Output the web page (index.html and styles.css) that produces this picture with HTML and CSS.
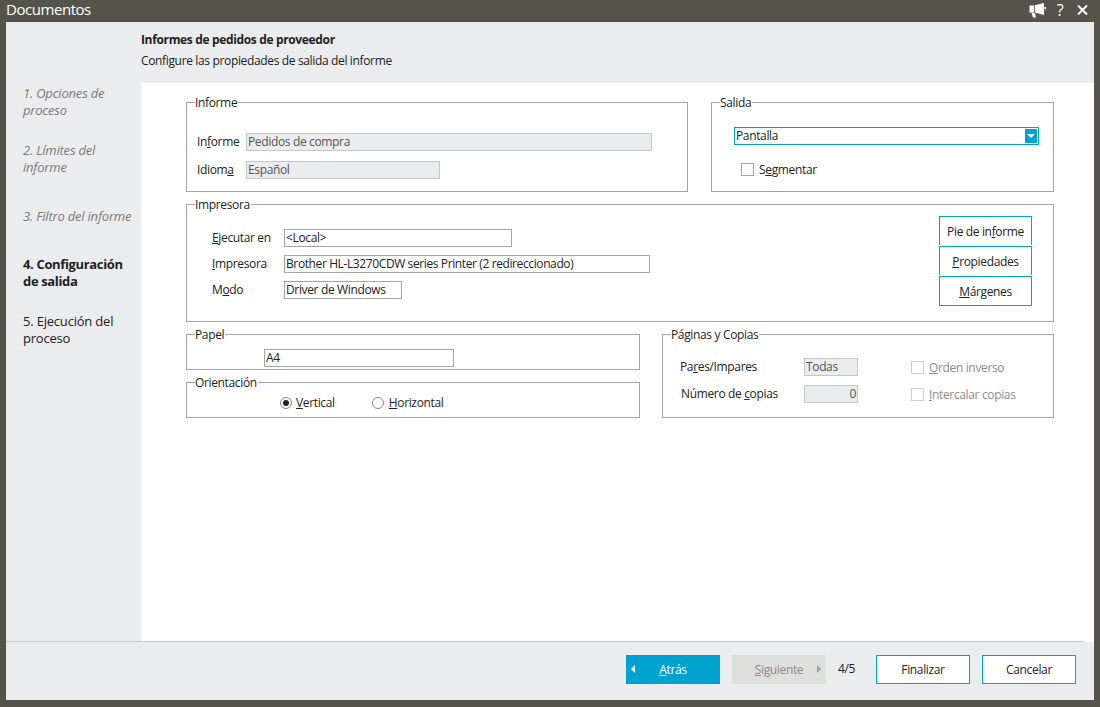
FILE: index.html
```html
<!DOCTYPE html>
<html lang="es">
<head>
    <meta charset="UTF-8">
    <title>Documentos</title>
    <link rel="stylesheet" href="styles.css">
</head>
<body>
<div class="window">
    <div class="titlebar">
        <span class="title">Documentos</span>
        <div class="title-icons">
            <svg class="icon-mega" width="17" height="15" viewBox="0 0 17 15"><path d="M.5 2.500H5v7H.5zM5.800 2.300 15 0v12L5.800 9.500zM15.500 4H17v2.500h-1.500zM2.500 10h3.500l1 4.500H4z" fill="#fff"/></svg>
            <span class="icon-help">?</span>
            <svg class="icon-close" width="11" height="10" viewBox="0 0 11 10"><path d="M1 .5l9 9M10 .5l-9 9" stroke="#fff" stroke-width="2"/></svg>
        </div>
    </div>

    <div class="dialog">
        <div class="head">
            <h1>Informes de pedidos de proveedor</h1>
            <p>Configure las propiedades de salida del informe</p>
        </div>

        <div class="middle">
            <!-- Steps -->
            <div class="steps">
                <div class="step step-1 done">1. Opciones de<br>proceso</div>
                <div class="step step-2 done">2. Límites del<br>informe</div>
                <div class="step step-3 done">3. Filtro del informe</div>
                <div class="step step-4 current">4. Configuración<br>de salida</div>
                <div class="step">5. Ejecución del<br>proceso</div>
            </div>

            <!-- Form -->
            <div class="main">
                <div class="row row-top">
                    <div class="group group-informe">
                        <span class="legend">Informe</span>
                        <div class="field">
                            <label class="lbl-informe">In<u>f</u>orme</label>
                            <div class="input off w-406">Pedidos de compra</div>
                        </div>
                        <div class="field">
                            <label class="lbl-informe">Idiom<u>a</u></label>
                            <div class="input off w-194">Español</div>
                        </div>
                    </div>
                    <div class="group group-salida">
                        <span class="legend">Salida</span>
                        <div class="select">
                            <span>Pantalla</span>
                            <span class="arrow"></span>
                        </div>
                        <div class="check check-seg"><span class="box"></span><span>S<u>e</u>gmentar</span></div>
                    </div>
                </div>

                <div class="group group-impresora">
                    <span class="legend">Impresora</span>
                    <div class="printer-fields">
                        <div class="field">
                            <label class="lbl-printer"><u>E</u>jecutar en</label>
                            <div class="input w-228">&lt;Local&gt;</div>
                        </div>
                        <div class="field">
                            <label class="lbl-printer"><u>I</u>mpresora</label>
                            <div class="input w-366">Brother HL-L3270CDW series Printer (2 redireccionado)</div>
                        </div>
                        <div class="field">
                            <label class="lbl-printer">M<u>o</u>do</label>
                            <div class="input w-118">Driver de Windows</div>
                        </div>
                    </div>
                    <div class="side-buttons">
                        <button class="btn">Pie de in<u>f</u>orme</button>
                        <button class="btn"><u>P</u>ropiedades</button>
                        <button class="btn"><u>M</u>árgenes</button>
                    </div>
                </div>

                <div class="row row-bottom">
                    <div class="col-left">
                        <div class="group group-papel">
                            <span class="legend">Papel</span>
                            <div class="input w-190">A4</div>
                        </div>
                        <div class="group group-orient">
                            <span class="legend">Orientación</span>
                            <div class="radio"><span class="dot on"></span><span><u>V</u>ertical</span></div>
                            <div class="radio radio-h"><span class="dot"></span><span><u>H</u>orizontal</span></div>
                        </div>
                    </div>
                    <div class="group group-paginas">
                        <span class="legend">Páginas y Copias</span>
                        <div class="copies-row">
                            <label class="lbl-copies">Pa<u>r</u>es/Impares</label>
                            <div class="input off w-54">Todas</div>
                            <div class="check disabled"><span class="box"></span><span><u>O</u>rden inverso</span></div>
                        </div>
                        <div class="copies-row">
                            <label class="lbl-copies lbl-num">Número de <u>c</u>opias</label>
                            <div class="input off w-54 right">0</div>
                            <div class="check disabled"><span class="box"></span><span><u>I</u>ntercalar copias</span></div>
                        </div>
                    </div>
                </div>
            </div>
        </div>

        <div class="footer">
            <button class="nav primary"><span class="tri tri-left"></span><span><u>A</u>trás</span></button>
            <button class="nav inactive"><span><u>S</u>iguiente</span><span class="tri tri-right"></span></button>
            <span class="counter">4/5</span>
            <button class="nav outline">Finalizar</button>
            <button class="nav outline">Cancelar</button>
        </div>
    </div>
</div>
</body>
</html>
```

FILE: styles.css
```css
* {
    box-sizing: border-box;
}

html, body {
    margin: 0;
    padding: 0;
    height: 100%;
}

body {
    background: #54544a;
    font-family: "Open Sans", "Noto Sans", sans-serif;
    font-size: 12px;
    letter-spacing: -0.35px;
    color: #222;
    overflow: hidden;
}

.window {
    width: 1100px;
    height: 707px;
    padding: 0 6px 7px;
    display: flex;
    flex-direction: column;
}

/* Title bar */
.titlebar {
    height: 22px;
    padding-bottom: 3px;
    display: flex;
    align-items: center;
    justify-content: space-between;
    color: #fff;
}

.title {
    margin-top: -2px;
    font-size: 15px;
    letter-spacing: -0.45px;
}

.title-icons {
    display: flex;
    align-items: center;
    padding-right: 6px;
}

.icon-mega {
    margin: 2px 9px 0 0;
}

.icon-help {
    font-size: 16px;
    width: 10px;
    margin-right: 12px;
    text-align: center;
}

/* Dialog */
.dialog {
    flex: 1;
    background: #ebecee;
    display: flex;
    flex-direction: column;
}

.head {
    height: 61px;
    padding: 10px 0 0 135px;
}

.head h1 {
    margin: 0;
    font-size: 12px;
    line-height: 16px;
    font-weight: 700;
}

.head p {
    margin: 5px 0 0;
    line-height: 16px;
}

.middle {
    flex: 1;
    display: flex;
}

.steps {
    width: 135px;
    padding: 2px 0 0 17px;
    font-size: 13px;
    line-height: 17px;
    letter-spacing: -0.2px;
    color: #222;
}

.step-1, .step-4 {
    margin-bottom: 23px;
}

.step-2 {
    margin-bottom: 32px;
}

.step-3 {
    margin-bottom: 31px;
}

.step.done {
    font-style: italic;
    color: #7a7a7a;
}

.step.current {
    font-weight: 700;
    letter-spacing: -0.35px;
}

.main {
    flex: 1;
    background: #fff;
    padding: 19px 40px 0 45px;
    display: flex;
    flex-direction: column;
    gap: 12px;
}

.row {
    display: flex;
    justify-content: space-between;
}

/* Groups */
.group {
    position: relative;
    border: 1px solid #a5a5a5;
}

.legend {
    position: absolute;
    top: -7px;
    left: 8px;
    padding: 0 1px 0 0;
    line-height: 14px;
    background: #fff;
    color: #222;
}

.group-informe {
    width: 502px;
    height: 90px;
    padding: 30px 0 0 10px;
}

.group-salida {
    width: 343px;
    height: 90px;
    padding: 24px 0 0 22px;
}

.group-impresora {
    height: 118px;
    display: flex;
    justify-content: space-between;
}

.printer-fields {
    padding: 24px 0 0 25px;
}

.side-buttons {
    padding: 11px 21px 0 0;
    display: flex;
    flex-direction: column;
}

.col-left {
    width: 454px;
    display: flex;
    flex-direction: column;
    gap: 12px;
}

.group-papel {
    height: 36px;
    padding: 14px 0 0 77px;
}

.group-orient {
    height: 36px;
    padding: 11px 0 0 93px;
    display: flex;
    align-items: flex-start;
    gap: 37px;
}

.group-paginas {
    width: 392px;
    height: 84px;
    padding: 23px 0 0 17px;
}

/* Fields */
.field {
    display: flex;
    align-items: center;
    margin-bottom: 10px;
}

.printer-fields .field {
    margin-bottom: 8px;
}

label {
    margin-top: -2px;
}

.lbl-informe {
    width: 49px;
}

.lbl-printer {
    width: 72px;
}

.input {
    height: 18px;
    line-height: 16px;
    padding-left: 1px;
    border: 1px solid #a5a5a5;
    background: #fff;
    white-space: nowrap;
}

.input.off {
    background: #ebecee;
    border-color: #c6c6c6;
    color: #555;
}

.input.right {
    text-align: right;
    padding-right: 1px;
}

.w-406 { width: 406px; }
.w-366 { width: 366px; letter-spacing: -0.39px; }
.w-228 { width: 228px; }
.w-194 { width: 194px; }
.w-190 { width: 190px; }
.w-118 { width: 118px; }
.w-54 { width: 54px; }

.select {
    width: 305px;
    height: 18px;
    padding: 0 1px;
    border: 1px solid #00a3d0;
    display: flex;
    align-items: center;
    justify-content: space-between;
    line-height: 16px;
}

.arrow {
    width: 12px;
    height: 14px;
    background: #00a3d0;
    position: relative;
}

.arrow::after {
    content: "";
    position: absolute;
    left: 2px;
    top: 5px;
    border-left: 4px solid transparent;
    border-right: 4px solid transparent;
    border-top: 4px solid #fff;
}

.check, .radio {
    display: flex;
    align-items: center;
}

.check-seg {
    margin: 16px 0 0 7px;
}

.box {
    width: 13px;
    height: 13px;
    margin-right: 5px;
    border: 1px solid #a5a5a5;
    background: #fff;
}

.check.disabled {
    color: #8c8c8c;
}

.check.disabled .box {
    border-color: #cfcfcf;
}

.dot {
    width: 12px;
    height: 12px;
    margin-right: 4px;
    border: 1px solid #8a8a8a;
    border-radius: 50%;
    position: relative;
}

.radio-h .dot {
    margin-right: 5px;
}

.dot.on::after {
    content: "";
    position: absolute;
    left: 2px;
    top: 2px;
    width: 6px;
    height: 6px;
    border-radius: 50%;
    background: #222;
}

.copies-row {
    display: flex;
    align-items: center;
    height: 18px;
    margin-bottom: 9px;
}

.lbl-copies {
    width: 124px;
}

.lbl-num {
    padding-left: 1px;
}

.copies-row .check {
    margin-left: 53px;
}

/* Buttons */
.btn {
    width: 93px;
    height: 30px;
    padding: 0;
    border: 1px solid #00a3d0;
    outline: 1px solid #fff;
    background: #fff;
    font: inherit;
    letter-spacing: inherit;
    color: #222;
}

.footer {
    height: 59px;
    display: flex;
    align-items: center;
    justify-content: flex-end;
    gap: 12px;
    padding: 0 18px 4px 0;
    position: relative;
    border-top: 1px solid #c8c9cc;
}

.footer::after {
    content: "";
    position: absolute;
    top: -1px;
    right: 0;
    width: 10px;
    height: 1px;
    background: #fff;
}

.nav {
    width: 94px;
    height: 29px;
    padding: 0;
    border: none;
    font: inherit;
    letter-spacing: inherit;
    display: flex;
    align-items: center;
    justify-content: center;
    position: relative;
}

.nav.primary {
    background: #00a3d0;
    color: #fff;
}

.nav.inactive {
    background: #dfdfdc;
    color: #8c8c8c;
}

.nav.outline {
    background: #fff;
    border: 1px solid #00a3d0;
    color: #222;
}

.tri {
    position: absolute;
    top: 10px;
    border-top: 4px solid transparent;
    border-bottom: 4px solid transparent;
}

.tri-left {
    left: 5px;
    border-right: 4px solid #fff;
}

.tri-right {
    right: 5px;
    border-left: 4px solid #a0a0a0;
}

.counter {
    width: 26px;
    padding-bottom: 1px;
}
```
